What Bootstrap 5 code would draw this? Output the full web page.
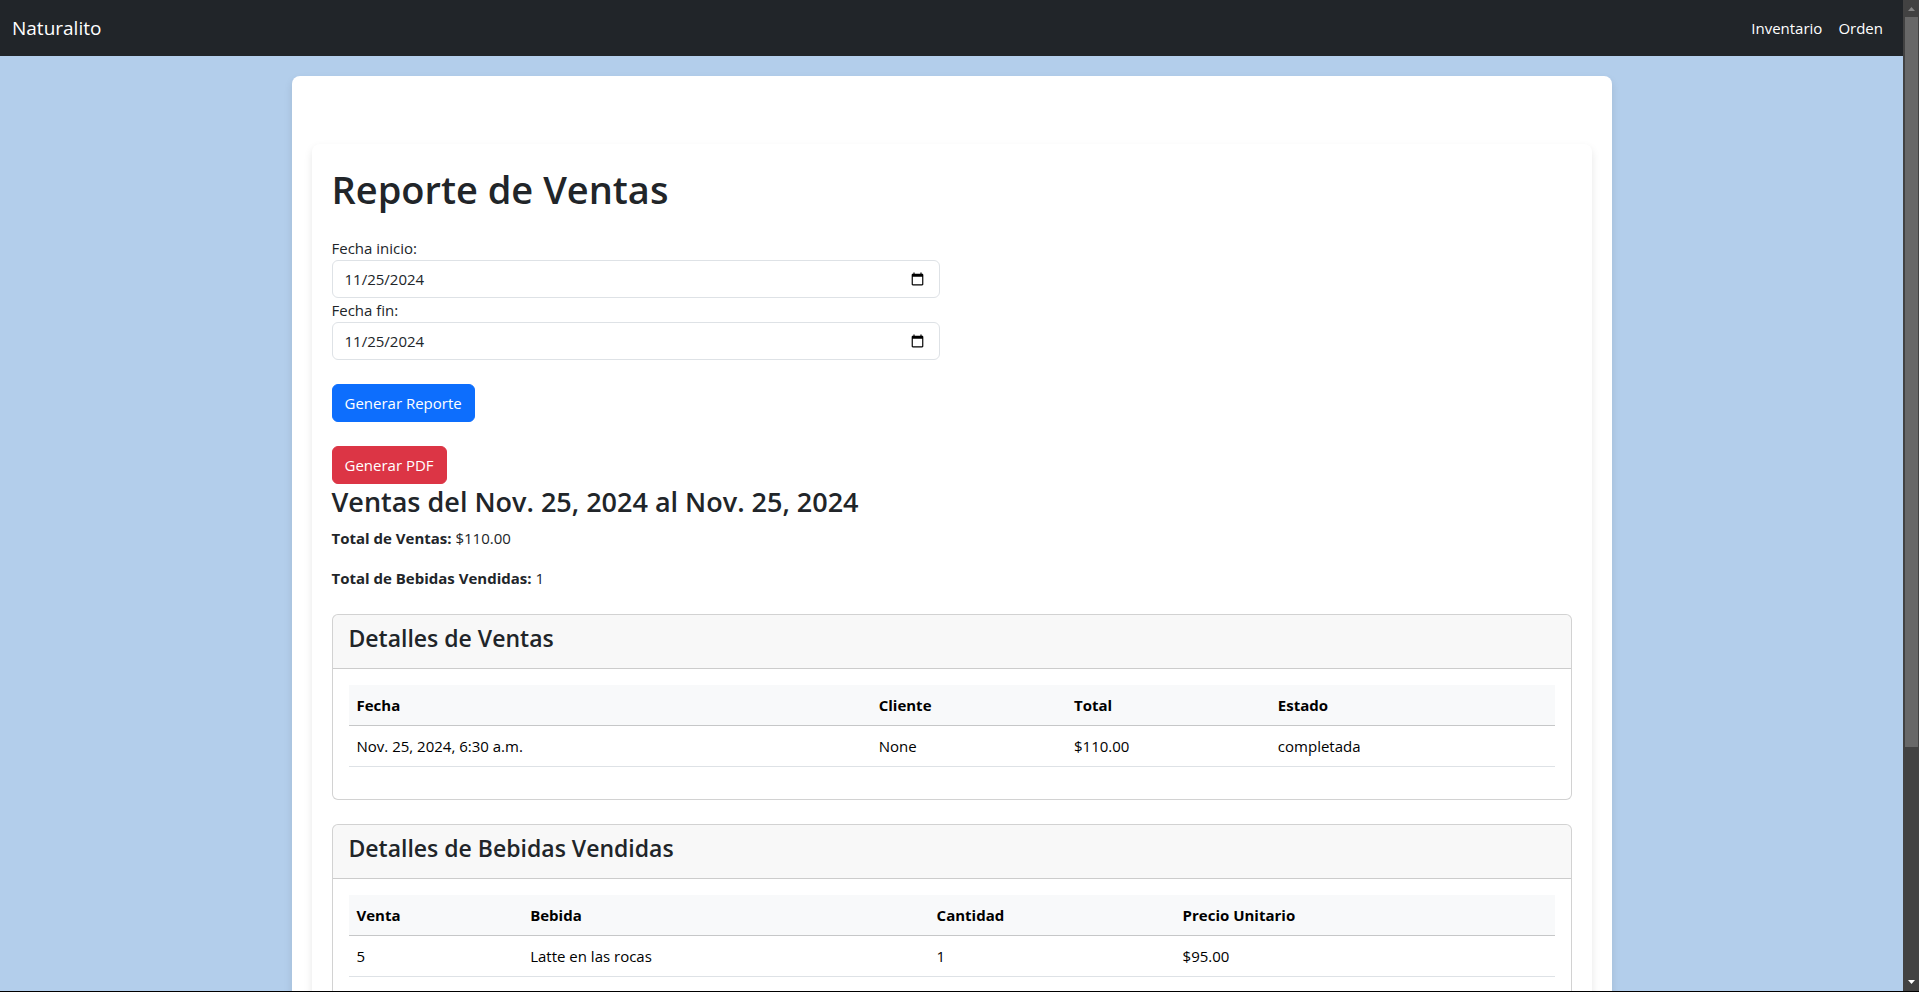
<!DOCTYPE html>
<html lang="en-US">
<head>
<meta charset="utf-8">
<meta name="viewport" content="width=device-width, initial-scale=1">
<title>Reporte de Ventas</title>
<link href="https://cdn.jsdelivr.net/npm/bootstrap@5.3.0/dist/css/bootstrap.min.css" rel="stylesheet">
<style>
  body { font-family: "Open Sans", "Noto Sans", sans-serif; font-size: 15px; line-height: 24px; background: #b3ceeb; }
  .window-frame { border-bottom: 1px solid #000; }
  .page-area { min-width: 0; }
  .navbar { min-height: 56px; }
  .navbar-brand { font-size: 19px; line-height: 30px; }
  .form-control, .btn { font-size: 15px; line-height: 24px; }
  .form-control { height: 38px; }
  h1, h2, .card-header h3 { font-weight: 600; }
  h1 { font-size: 38px; line-height: 50px; margin-bottom: 22px; }
  h2 { font-size: 27px; line-height: 36px; margin-bottom: 6px; }
  .card-header h3 { font-size: 23px; line-height: 31px; margin-bottom: 6px; }
  .sheet, .report { background: #fff; border-radius: 8px; padding: 20px; }
  .sheet { margin-top: 20px; box-shadow: 0 4px 8px rgba(0, 0, 0, .1); }
  .report { margin-top: 48px; box-shadow: 0 4px 8px rgba(0, 0, 0, .1); }
  .table { table-layout: fixed; --bs-table-color: #000; }
  .table thead th { border-bottom-color: #c6c7c8; }
  .scroll-track { width: 16px; background: #424242; }
  .scroll-track svg { display: block; width: 16px; height: 17px; }
  .scroll-thumb { width: 13px; height: 73.7%; margin-left: 2px; background: #686868; }
</style>
</head>
<body>
<div class="window-frame d-flex vh-100 overflow-hidden">
  <div class="page-area flex-grow-1 overflow-hidden">
    <nav class="navbar navbar-expand navbar-dark bg-dark">
      <div class="container-fluid">
        <a class="navbar-brand" href="#">Naturalito</a>
        <ul class="navbar-nav ms-auto">
          <li class="nav-item"><a class="nav-link text-white" href="#">Inventario</a></li>
          <li class="nav-item"><a class="nav-link text-white" href="#">Orden</a></li>
        </ul>
      </div>
    </nav>

    <main class="container sheet">
      <section class="report">
        <h1>Reporte de Ventas</h1>
        <form>
          <div class="row">
            <div class="col-md-6">
              <label class="d-block" for="inicio">Fecha inicio:</label>
              <input class="form-control" type="date" id="inicio" value="2024-11-25">
              <label class="d-block" for="fin">Fecha fin:</label>
              <input class="form-control" type="date" id="fin" value="2024-11-25">
            </div>
          </div>
          <button class="btn btn-primary d-block my-4" type="button">Generar Reporte</button>
          <button class="btn btn-danger d-block" type="button">Generar PDF</button>
        </form>

        <h2>Ventas del Nov. 25, 2024 al Nov. 25, 2024</h2>
        <p><strong>Total de Ventas:</strong> $110.00</p>
        <p class="mb-4"><strong>Total de Bebidas Vendidas:</strong> 1</p>

        <div class="card mb-4">
          <div class="card-header"><h3>Detalles de Ventas</h3></div>
          <div class="card-body">
            <table class="table">
              <colgroup><col style="width:43.3%"><col style="width:16.2%"><col style="width:16.9%"><col></colgroup>
              <thead class="table-light">
                <tr><th>Fecha</th><th>Cliente</th><th>Total</th><th>Estado</th></tr>
              </thead>
              <tbody>
                <tr><td>Nov. 25, 2024, 6:30 a.m.</td><td>None</td><td>$110.00</td><td>completada</td></tr>
              </tbody>
            </table>
          </div>
        </div>

        <div class="card mb-4">
          <div class="card-header"><h3>Detalles de Bebidas Vendidas</h3></div>
          <div class="card-body">
            <table class="table">
              <colgroup><col style="width:14.4%"><col style="width:33.7%"><col style="width:20.4%"><col></colgroup>
              <thead class="table-light">
                <tr><th>Venta</th><th>Bebida</th><th>Cantidad</th><th>Precio Unitario</th></tr>
              </thead>
              <tbody>
                <tr><td>5</td><td>Latte en las rocas</td><td>1</td><td>$95.00</td></tr>
              </tbody>
            </table>
          </div>
        </div>
      </section>
    </main>
  </div>

  <div class="scroll-track d-flex flex-column flex-shrink-0" aria-hidden="true">
    <svg class="flex-shrink-0" viewBox="0 0 16 17"><path d="M5 11h7L8.500 7z" fill="#868686"/></svg>
    <div class="scroll-thumb flex-shrink-0"></div>
    <svg class="mt-auto flex-shrink-0" viewBox="0 0 16 17"><path d="M5 6h7L8.500 10z" fill="#fff"/></svg>
  </div>
</div>
<script src="https://cdn.jsdelivr.net/npm/bootstrap@5.3.0/dist/js/bootstrap.bundle.min.js"></script>
</body>
</html>
